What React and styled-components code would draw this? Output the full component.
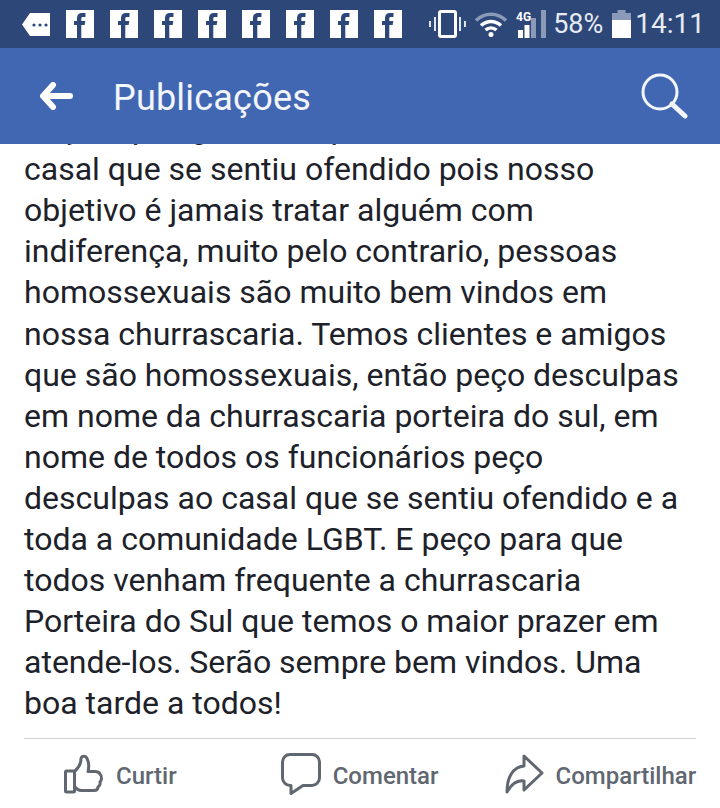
import React from 'react';
import styled, { createGlobalStyle } from 'styled-components';

const GlobalStyle = createGlobalStyle`
  html, body { margin: 0; padding: 0; background: #fff; }
  body { font-family: Roboto, "Liberation Sans", sans-serif; }
`;

const Page = styled.div`
  width: 720px;
  height: 808px;
  display: flex;
  flex-direction: column;
  overflow: hidden;
  background: #fff;
`;

const StatusBar = styled.div`
  height: 48px;
  flex: none;
  background: #2c4778;
  display: flex;
  align-items: center;
  padding: 0 15px 0 22px;
  color: #e6ebf3;
`;

const FbRow = styled.div`
  display: flex;
  gap: 16px;
  margin-left: 16px;
`;

const FbBox = styled.div`
  width: 28px;
  height: 28px;
  background: #fff;
`;

const StatusRight = styled.div`
  margin-left: auto;
  display: flex;
  align-items: center;
`;

const StatusSlot = styled.div`
  display: flex;
  margin-left: ${(p) => p.$left || 0}px;
`;

const StatusText = styled.span`
  font-size: ${(p) => p.$size}px;
  line-height: 48px;
  margin-left: ${(p) => p.$left || 0}px;
`;

const TopBar = styled.div`
  height: 96px;
  flex: none;
  background: #4267b2;
  display: flex;
  align-items: center;
  padding: 0 32px 0 39px;
  color: #fff;
`;

const Title = styled.h1`
  margin: 3px 0 0 40px;
  font-size: 36px;
  font-weight: 400;
  color: #f2f5fa;
  letter-spacing: 0.2px;
`;

const SearchWrap = styled.div`
  margin-left: auto;
  display: flex;
`;

const PostBody = styled.div`
  flex: 1;
  min-height: 0;
  overflow: hidden;
  display: flex;
  flex-direction: column;
  justify-content: flex-end;
  padding: 0 24px 14px;
`;

const Line = styled.div`
  flex: none;
  height: 41.05px;
  line-height: 41.05px;
  font-size: 32px;
  color: #1d2129;
  white-space: nowrap;
`;

const ActionBar = styled.div`
  flex: none;
  height: 69px;
  margin: 0 24px;
  border-top: 1px solid #ced0d4;
  display: flex;
  align-items: center;
  color: #606770;
`;

const Action = styled.div`
  display: flex;
  align-items: center;
  gap: ${(p) => p.$gap}px;
  margin-left: ${(p) => p.$left}px;
`;

const ActionLabel = styled.span`
  font-size: 24px;
  font-weight: 500;
  color: #606770;
  margin-top: 4px;
`;

function FbIcon() {
  return (
    <FbBox>
      <svg width="28" height="28" viewBox="0 0 28 28">
        <path d="M11 28V15H8v-4h3V8c0-3.400 2-5 5-5h3.500v4H17c-1.200 0-1.700.6-1.700 1.800V11h4l-.6 4h-3.400v13z" fill="#2c4778" />
      </svg>
    </FbBox>
  );
}

function NotifIcon() {
  return (
    <svg width="28" height="23" viewBox="0 0 28 23">
      <path d="M8 0h20v23H8L0 11.500z" fill="#fff" />
      <circle cx="12" cy="12" r="1.600" fill="#2c4778" />
      <circle cx="18" cy="12" r="1.600" fill="#2c4778" />
      <circle cx="24" cy="12" r="1.600" fill="#2c4778" />
    </svg>
  );
}

function VibrateIcon() {
  return (
    <svg width="37" height="28" viewBox="0 0 37 28">
      <rect x="10.500" y="1.500" width="16" height="25" rx="1.500" fill="none" stroke="#fff" strokeWidth="3" />
      <path d="M6 7v14M1 11v6M31 7v14M36 11v6" stroke="#dfe4ee" strokeWidth="2" fill="none" />
    </svg>
  );
}

function WifiIcon() {
  return (
    <svg width="32" height="25" viewBox="0 0 32 25">
      <path d="M1 8.500C9.500 0 22.500 0 31 8.500" fill="none" stroke="#8b9ab8" strokeWidth="3.500" />
      <path d="M6 13.500c6-5.500 14-5.500 20 0" fill="none" stroke="#fff" strokeWidth="3.500" />
      <path d="M10.500 18c3.200-2.800 7.800-2.800 11 0" fill="none" stroke="#fff" strokeWidth="3.500" />
      <circle cx="16" cy="22.500" r="2.500" fill="#fff" />
    </svg>
  );
}

function SignalIcon() {
  return (
    <svg width="31" height="28" viewBox="0 0 31 28">
      <text x="0" y="11" fontFamily="Roboto" fontSize="12" fontWeight="700" fill="#fff">4G</text>
      <rect x="2" y="20" width="5" height="8" fill="#fff" />
      <rect x="8.500" y="15" width="5" height="13" fill="#fff" />
      <rect x="15" y="8" width="5" height="20" fill="#8b9ab8" />
      <rect x="25" y="0" width="5" height="28" fill="#8b9ab8" />
    </svg>
  );
}

function BatteryIcon() {
  return (
    <svg width="19" height="28" viewBox="0 0 19 28">
      <path d="M5.500 0h8v3H19v10H0V3h5.500z" fill="#8b9ab8" />
      <rect x="0" y="10" width="19" height="18" fill="#fff" />
    </svg>
  );
}

function BackIcon() {
  return (
    <svg width="34" height="28" viewBox="0 0 34 28">
      <path d="M14 3L4 14l10 11M5 14h26" fill="none" stroke="#fff" strokeWidth="6" strokeLinecap="round" strokeLinejoin="round" />
    </svg>
  );
}

function SearchIcon() {
  return (
    <svg width="48" height="48" viewBox="0 0 48 48">
      <circle cx="20" cy="20" r="17" fill="none" stroke="#f2f5fa" strokeWidth="3" />
      <path d="M32 32l13 12" stroke="#f2f5fa" strokeWidth="5" strokeLinecap="round" />
    </svg>
  );
}

function LikeIcon() {
  return (
    <svg width="40" height="40" viewBox="0 0 40 40">
      <g fill="none" stroke="#606770" strokeWidth="3" strokeLinejoin="round" strokeLinecap="round">
        <rect x="1.500" y="17" width="9" height="21" rx="1" />
        <path d="M11 33c2 2.500 3.500 3.500 6 3.500h13c2.500 0 4-1.500 4-3.500 1.500-1 2.500-3 2-5 2-1.500 2-6 0-8-1-2-3-2.500-5-2.500h-7c1-4 1-9-1-13-1.500-3-5-3-6 0 0 5-2 9-6 12.500" />
      </g>
    </svg>
  );
}

function CommentIcon() {
  return (
    <svg width="40" height="42" viewBox="0 0 40 42">
      <path d="M9 1.500h22c4 0 7.500 3 7.500 7.500v16c0 4-3.500 7.500-7.500 7.500h-9L10 40.500V32.500H9c-4 0-7.500-3.500-7.500-7.500V9c0-4.500 3.500-7.500 7.500-7.500z" fill="none" stroke="#606770" strokeWidth="3" strokeLinejoin="round" />
    </svg>
  );
}

function ShareIcon() {
  return (
    <svg width="40" height="40" viewBox="0 0 40 40">
      <path d="M19 2l18 17-18 17V27C12 26 6 31 2 38c0-15 6-25 17-26z" fill="none" stroke="#606770" strokeWidth="3" strokeLinejoin="round" />
    </svg>
  );
}

const lines = [
  'Peço aqui agora e ao público e ao',
  'casal que se sentiu ofendido pois nosso',
  'objetivo é jamais tratar alguém com',
  'indiferença, muito pelo contrario, pessoas',
  'homossexuais são muito bem vindos em',
  'nossa churrascaria. Temos clientes e amigos',
  'que são homossexuais, então peço desculpas',
  'em nome da churrascaria porteira do sul, em',
  'nome de todos os funcionários peço',
  'desculpas ao casal que se sentiu ofendido e a',
  'toda a comunidade LGBT. E peço para que',
  'todos venham frequente a churrascaria',
  'Porteira do Sul que temos o maior prazer em',
  'atende-los. Serão sempre bem vindos. Uma',
  'boa tarde a todos!',
];

export default function App() {
  return (
    <Page>
      <GlobalStyle />
      <StatusBar>
        <NotifIcon />
        <FbRow>
          {Array.from({ length: 8 }).map((_, i) => (
            <FbIcon key={i} />
          ))}
        </FbRow>
        <StatusRight>
          <VibrateIcon />
          <StatusSlot $left={9}><WifiIcon /></StatusSlot>
          <StatusSlot $left={9}><SignalIcon /></StatusSlot>
          <StatusText $size={27} $left={6}>58%</StatusText>
          <StatusSlot $left={9}><BatteryIcon /></StatusSlot>
          <StatusText $size={28} $left={4}>14:11</StatusText>
        </StatusRight>
      </StatusBar>
      <TopBar>
        <BackIcon />
        <Title>Publicações</Title>
        <SearchWrap>
          <SearchIcon />
        </SearchWrap>
      </TopBar>
      <PostBody>
        {lines.map((l) => (
          <Line key={l}>{l}</Line>
        ))}
      </PostBody>
      <ActionBar>
        <Action $left={40} $gap={12}>
          <LikeIcon />
          <ActionLabel>Curtir</ActionLabel>
        </Action>
        <Action $left={104} $gap={12}>
          <CommentIcon />
          <ActionLabel>Comentar</ActionLabel>
        </Action>
        <Action $left={66} $gap={11}>
          <ShareIcon />
          <ActionLabel>Compartilhar</ActionLabel>
        </Action>
      </ActionBar>
    </Page>
  );
}
